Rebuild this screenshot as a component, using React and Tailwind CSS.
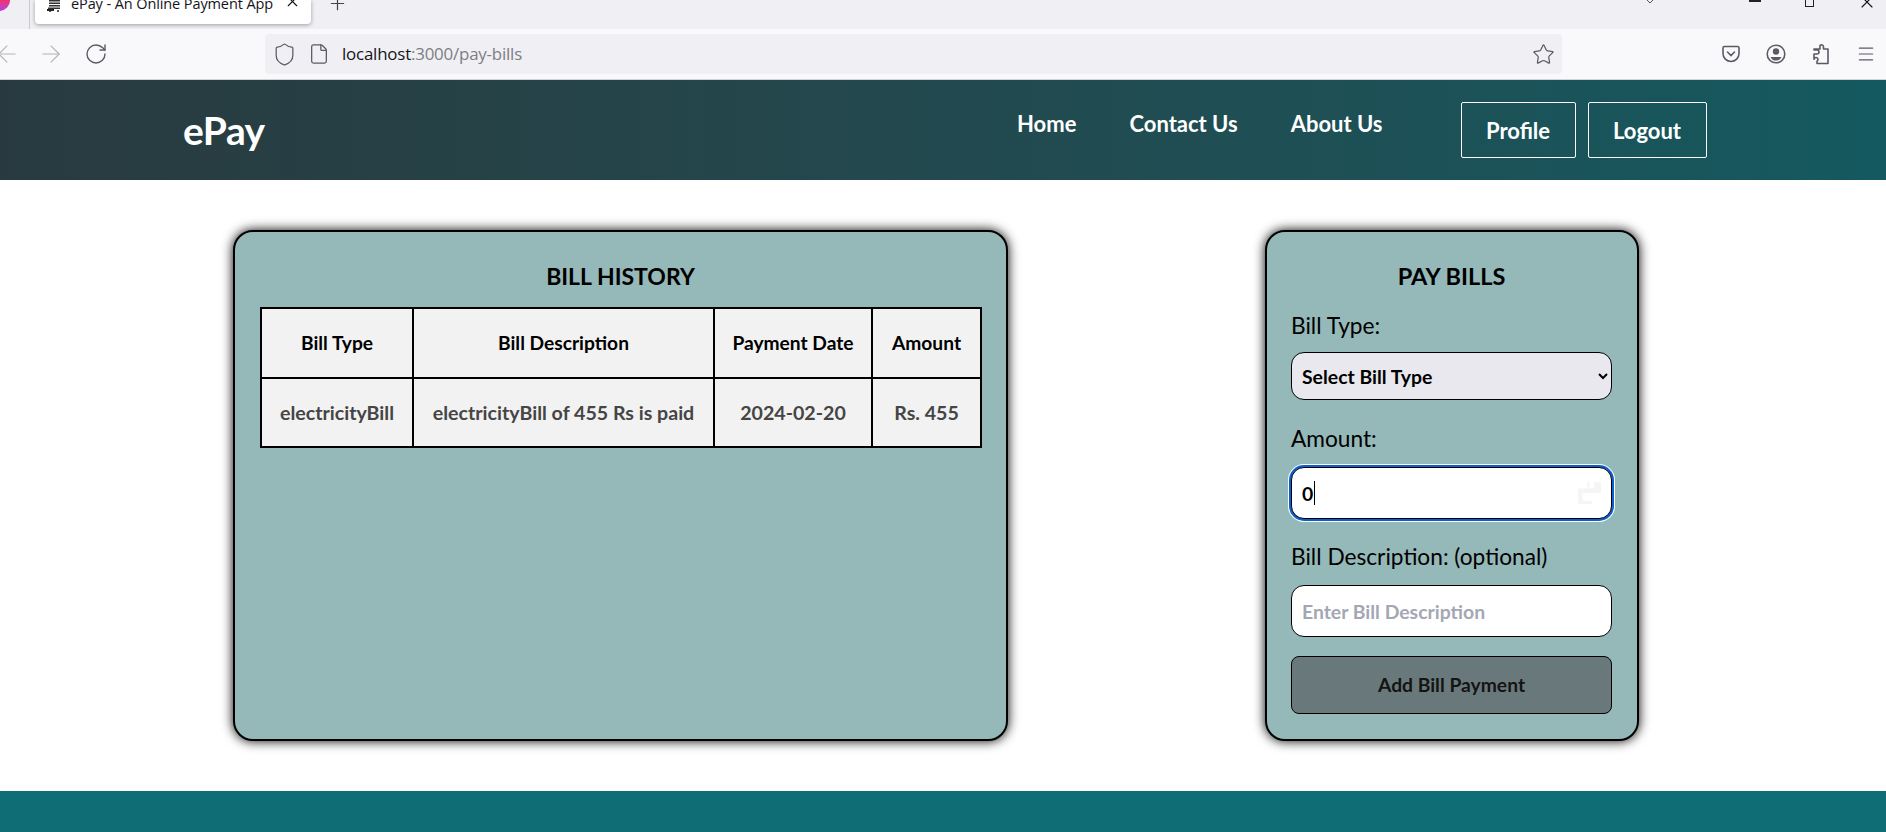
import React from 'react'
import { ArrowLeft, ArrowRight, RotateCw, Shield, File, Star, Menu, X, Plus, ChevronDown } from 'lucide-react'

const navLinks = ['Home', 'Contact Us', 'About Us']
const columns = [
	{ label: 'Bill Type', width: 'w-[152px]' },
	{ label: 'Bill Description', width: 'w-[301px]' },
	{ label: 'Payment Date', width: 'w-[158px]' },
	{ label: 'Amount', width: 'w-[109px]' },
]
const row = ['electricityBill', 'electricityBill of 455 Rs is paid', '2024-02-20', 'Rs. 455']

const PocketIcon = () => (
	<svg width="20" height="20" viewBox="0 0 20 20" fill="none" stroke="#5b5b66" strokeWidth="1.6">
		<path d="M3.5 2.5h13a1.5 1.5 0 0 1 1.5 1.5v5.5a8 8 0 0 1-16 0V4a1.5 1.5 0 0 1 1.5-1.5z" />
		<path d="M6.5 8l3.5 3.5L13.5 8" strokeLinecap="round" />
	</svg>
)

const ProfileIcon = () => (
	<svg width="20" height="20" viewBox="0 0 20 20" fill="none">
		<circle cx="10" cy="10" r="8.8" stroke="#5b5b66" strokeWidth="1.6" />
		<circle cx="10" cy="7.5" r="3.2" fill="#5b5b66" />
		<path d="M4.5 13h11a6 6 0 0 1-11 0z" fill="#5b5b66" />
	</svg>
)

const PuzzleIcon = () => (
	<svg width="20" height="22" viewBox="0 0 20 22" fill="none" stroke="#5b5b66" strokeWidth="1.6" strokeLinejoin="round">
		<path d="M9 2.5a2 2 0 0 1 3.5 1.3V6h4.5v14.5H6v-2.2a2 2 0 1 0-3-2V11h3a2 2 0 1 0 0-4H3V6h6V3.5z" />
	</svg>
)

const TabIcon = () => (
	<svg width="15" height="12" viewBox="0 0 15 12" className="shrink-0 self-start">
		<path d="M2 0h11v1.5H2zM2 2.5h11V4H2zM2 5h11v1.5H2zM1 7.5h12V9H1z" fill="#333" />
		<rect x="0" y="9" width="7" height="2" fill="#222" />
		<circle cx="3" cy="11" r="1" fill="#222" />
		<circle cx="11" cy="11" r="1" fill="#222" />
	</svg>
)

const BrowserChrome = () => (
	<div className="shrink-0 text-[#15141a] font-['Open_Sans',sans-serif]">
		<div className="h-[29px] bg-[#f0eff4] flex overflow-hidden">
			<div className="w-[30px] h-[29px] border-r border-[#c9c9cf] shrink-0 overflow-hidden">
				<div className="w-[22px] h-[22px] -ml-[12px] -mt-[11px] rounded-full bg-gradient-to-b from-[#ff9640] via-[#f0306a] to-[#b833e1]" />
			</div>
			<div className="ml-[5px] w-[276px] h-[24px] bg-white rounded-b shadow-[0_1px_4px_rgba(0,0,0,0.35)] flex items-start px-[12px] shrink-0 overflow-hidden">
				<TabIcon />
				<span className="ml-[9px] -mt-[6px] text-[14.5px] leading-[20px] whitespace-nowrap tracking-[-0.1px]">ePay - An Online Payment App</span>
				<X size={17} strokeWidth={1.6} className="ml-auto -mt-[7px] -mr-[2px] shrink-0" />
			</div>
			<Plus size={21} strokeWidth={1.4} className="ml-[16px] -mt-[7px] text-[#444] shrink-0" />
			<div className="ml-auto flex items-start">
				<ChevronDown size={16} strokeWidth={1.5} className="-mt-[7px] text-[#555]" />
				<div className="ml-[91px] w-[12px] h-[2px] bg-[#222]" />
				<div className="ml-[44px] w-[9px] h-[7px] border-x border-b border-[#222]" />
				<X size={20} strokeWidth={1.4} className="ml-[43px] mr-[9px] -mt-[8px]" />
			</div>
		</div>
		<div className="h-[51px] bg-[#f9f9fb] border-b border-[#d4d4d8] flex items-center">
			<ArrowLeft size={28} strokeWidth={1} className="-ml-[7px] shrink-0 text-[#b4b4ba]" />
			<ArrowRight size={28} strokeWidth={1} className="ml-[16px] shrink-0 text-[#b4b4ba]" />
			<RotateCw size={24} strokeWidth={1.4} className="ml-[19px] shrink-0 text-[#5b5b66]" />
			<div className="ml-[157px] w-[1297px] h-[40px] shrink-0 bg-[#f0f0f4] rounded flex items-center pl-[7px] pr-[7px]">
				<Shield size={25} strokeWidth={1.2} className="text-[#5b5b66]" />
				<File size={22} strokeWidth={1.4} className="ml-[11px] text-[#5b5b66]" />
				<span className="ml-[12px] text-[16.9px] tracking-[-0.2px]">
					localhost<span className="text-[#7d7d85]">:3000/pay-bills</span>
				</span>
				<Star size={23} strokeWidth={1.3} className="ml-auto text-[#5b5b66]" />
			</div>
			<div className="ml-[159px] flex items-center gap-[25px]">
				<PocketIcon />
				<ProfileIcon />
				<PuzzleIcon />
				<Menu size={20} strokeWidth={1.4} className="text-[#5b5b66]" />
			</div>
		</div>
	</div>
)

const Header = () => (
	<header className="h-[100px] shrink-0 bg-gradient-to-r from-[#283a3f] to-[#13595f] flex items-center pl-[183px] font-['Lato',sans-serif] text-white">
		<a className="text-[39px] font-bold tracking-[-0.5px] w-[81px] whitespace-nowrap">ePay</a>
		<nav className="ml-[753px] flex gap-[53px] -mt-[14px]">
			{navLinks.map((link) => (
				<a key={link} className="text-[22px] font-bold whitespace-nowrap">
					{link}
				</a>
			))}
		</nav>
		<div className="ml-[78px] flex gap-[12px]">
			<button className="w-[115px] h-[56px] border border-white rounded-[2px] text-[22px] font-bold">Profile</button>
			<button className="w-[119px] h-[56px] border border-white rounded-[2px] text-[22px] font-bold">Logout</button>
		</div>
	</header>
)

const BillHistory = () => (
	<section className="w-[775px] h-[511px] shrink-0 bg-[#95b8b9] border-2 border-black rounded-[20px] shadow-[0_0_12px_rgba(0,0,0,1)] px-[25px] pt-[29px]">
		<h2 className="text-center text-[23px] leading-[30px] font-bold text-black">BILL HISTORY</h2>
		<table className="mt-[16px] w-[720px] table-fixed border-collapse bg-[#f2f2f2]">
			<thead>
				<tr className="h-[70px]">
					{columns.map((col) => (
						<th key={col.label} className={`${col.width} border-2 border-black text-[19.2px] font-bold text-black`}>
							{col.label}
						</th>
					))}
				</tr>
			</thead>
			<tbody>
				<tr className="h-[69px]">
					{row.map((cell) => (
						<td key={cell} className="border-2 border-black text-center text-[19.6px] font-bold text-[#454545] whitespace-nowrap">
							{cell}
						</td>
					))}
				</tr>
			</tbody>
		</table>
	</section>
)

const fieldClass =
	"w-full border border-black rounded-[13px] px-[10px] text-[19.4px] font-bold text-black outline-none font-['Lato',sans-serif]"

const PayBills = () => (
	<section className="w-[374px] h-[511px] shrink-0 ml-[257px] bg-[#95b8b9] border-2 border-black rounded-[20px] shadow-[0_0_12px_rgba(0,0,0,1)] pl-[24px] pr-[25px] pt-[29px]">
		<h2 className="text-center text-[23.5px] leading-[30px] font-bold text-black">PAY BILLS</h2>

		<label className="block mt-[20px] text-[22.7px] leading-[30px] text-black">Bill Type:</label>
		<select className={`${fieldClass} !pl-[6px] mt-[11px] h-[48px] bg-[#e9e8ee]`}>
			<option>Select Bill Type</option>
		</select>

		<label className="block mt-[24px] text-[22.7px] leading-[30px] text-black">Amount:</label>
		<div className="relative mt-[13px]">
			<input
				type="text"
				defaultValue="0"
				className={`${fieldClass} h-[52px] bg-white shadow-[0_0_0_2px_#0a5fd0,0_0_0_3px_#ffffff]`}
			/>
			{/* caret and the faint spinner from the capture */}
			<div className="absolute left-[23px] top-[14px] w-px h-[24px] bg-black" />
			<div className="absolute right-[11px] top-[15px] w-[23px] h-[22px] bg-[#f5f5f5] [clip-path:polygon(0_0,40%_0,40%_30%,0_30%,0_100%,60%_100%,60%_85%,20%_85%,20%_50%,100%_50%,100%_0,70%_0,70%_30%,50%_30%,50%_0)]" />
		</div>

		<label className="block mt-[23px] text-[22.7px] leading-[30px] text-black">Bill Description: (optional)</label>
		<input
			type="text"
			placeholder="Enter Bill Description"
			className={`${fieldClass} mt-[13px] h-[52px] bg-white placeholder:text-[#a3a7b3]`}
		/>

		<button className="mt-[19px] w-full h-[58px] bg-[#69797b] border border-black rounded-[8px] text-[19.3px] font-bold text-[#141414]">
			Add Bill Payment
		</button>
	</section>
)

export default function App() {
	return (
		<div className="w-[1886px] h-[832px] flex flex-col overflow-hidden bg-white font-['Lato',sans-serif]">
			<BrowserChrome />
			<Header />
			<main className="h-[611px] shrink-0 flex items-start pl-[233px] pt-[50px]">
				<BillHistory />
				<PayBills />
			</main>
			<footer className="flex-1 bg-[#0f6e75]" />
		</div>
	)
}
